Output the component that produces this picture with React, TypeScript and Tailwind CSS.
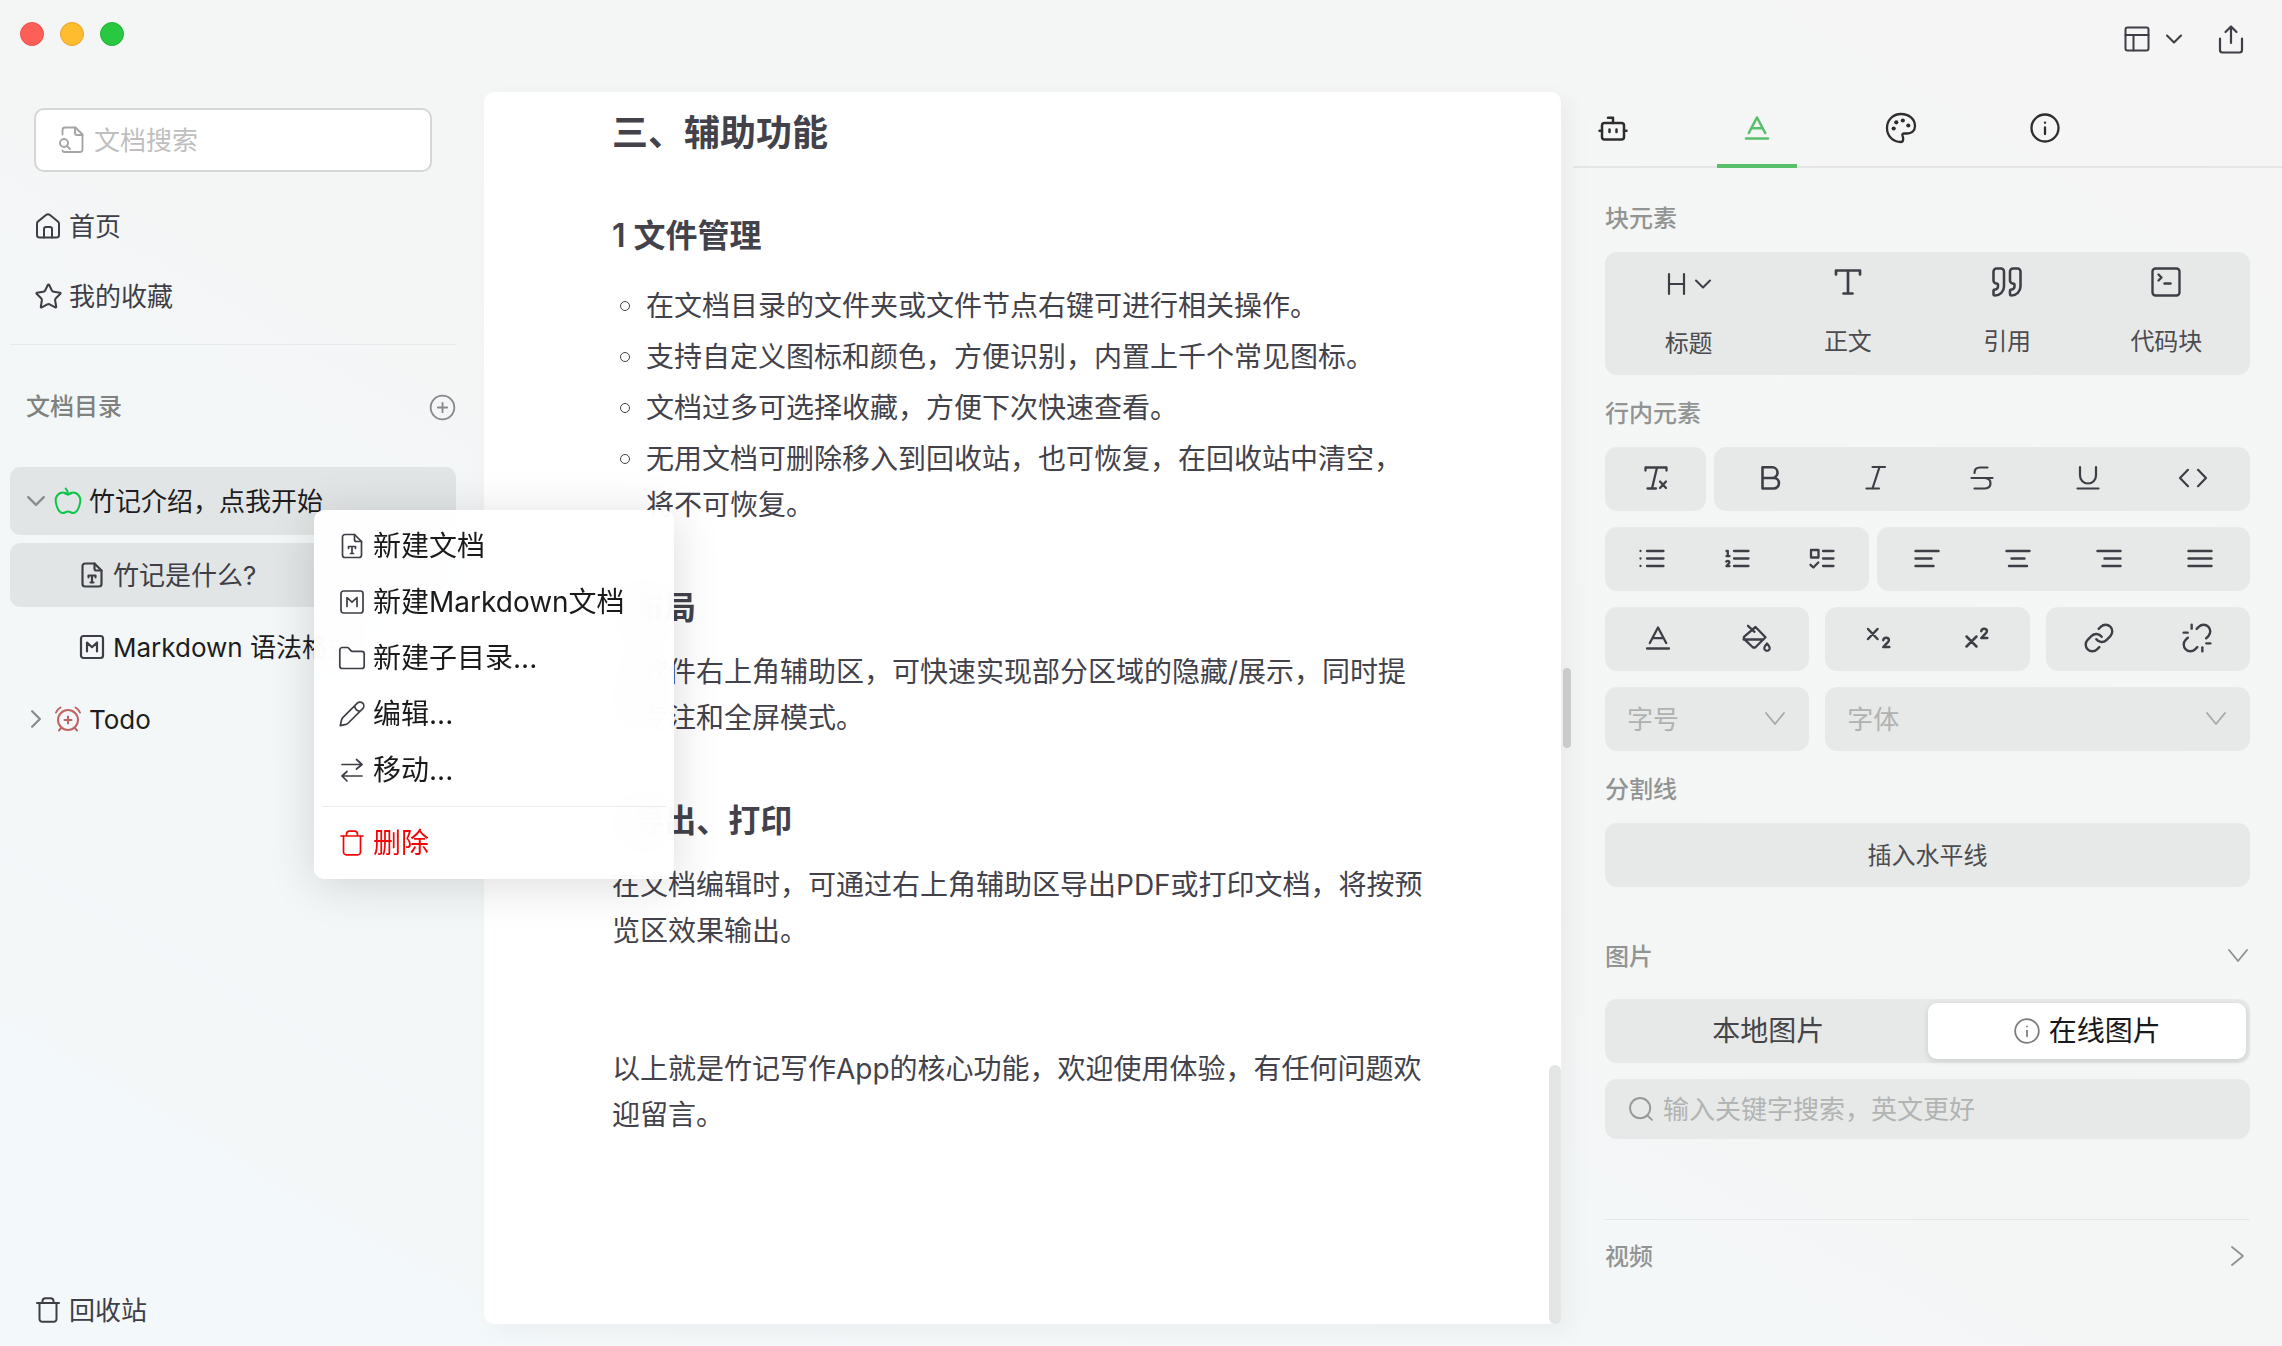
import type { ReactNode } from "react"
import { Link, Quote, SquareTerminal, Star, Unlink } from "lucide-react"

function Svg({ children, size = 32, sw = 2.3, className = "" }: { children: ReactNode; size?: number; sw?: number; className?: string }) {
  return (
    <svg
      width={size}
      height={size}
      viewBox="0 0 32 32"
      fill="none"
      stroke="currentColor"
      strokeWidth={sw}
      strokeLinecap="round"
      strokeLinejoin="round"
      className={`shrink-0 ${className}`}
      aria-hidden="true"
    >
      {children}
    </svg>
  )
}

function ChevronDownIcon({ sw = 1.8, className = "" }: { sw?: number; className?: string }) {
  return (
    <svg width="20" height="20" viewBox="0 0 20 20" fill="none" stroke="currentColor" strokeWidth={sw} strokeLinecap="round" strokeLinejoin="round" className={`shrink-0 ${className}`} aria-hidden="true">
      <path d="M1 4l9 11 9-11" />
    </svg>
  )
}

function SmallChevron({ size = 18, className = "" }: { size?: number; className?: string }) {
  return (
    <svg width={size} height={size} viewBox="0 0 18 18" fill="none" stroke="currentColor" strokeWidth="2.1" strokeLinecap="round" strokeLinejoin="round" className={`shrink-0 ${className}`} aria-hidden="true">
      <path d="M2 5.500l7 7 7-7" />
    </svg>
  )
}

const docPath = (
  <>
    <path d="M18.500 4.500H9A2.500 2.500 0 0 0 6.500 7v18A2.500 2.500 0 0 0 9 27.500h14A2.500 2.500 0 0 0 25.500 25V11.500z" />
    <path d="M18.500 4.500v5a2 2 0 0 0 2 2h5" />
    <path d="M12.500 18.300v-1.800h7v1.800M16 16.500v7M14.500 23.500h3" />
  </>
)

const mdPath = (
  <>
    <rect x="5" y="5" width="22" height="22" rx="2.500" />
    <path d="M11 20.500v-9l5 4.700 5-4.700v9" />
  </>
)

const trashPath = (
  <>
    <path d="M5 9h22M10.500 9V7q0-2.800 3-2.800h5q3 0 3 2.800v2" />
    <path d="M7.500 9v16a2.800 2.800 0 0 0 2.800 2.800h11.400a2.800 2.800 0 0 0 2.800-2.800V9" />
  </>
)

const infoPath = (
  <>
    <circle cx="16" cy="16" r="13.500" />
    <path d="M16 15.500v6.500M16 10.600v.2" />
  </>
)

const letterPath = <path d="M7.800 21L16 5.500 24.200 21M10.800 16.200h10.400M5 26.500h22" />

const menuItems = [
  { label: "新建文档", icon: docPath },
  { label: "新建Markdown文档", icon: mdPath },
  {
    label: "新建子目录...",
    icon: <path d="M3.800 8a2.500 2.500 0 0 1 2.500-2.500h5q1 0 1.700.9l1.600 2q.7.900 1.800.900h9.300a2.500 2.500 0 0 1 2.500 2.500V24a2.500 2.500 0 0 1-2.500 2.500H6.300A2.500 2.500 0 0 1 3.800 24z" />,
  },
  {
    label: "编辑...",
    icon: <path d="M4.300 27.700l1.200-5.700q.3-1.300 1.300-2.300L21.300 5.200a3.700 3.700 0 0 1 5.400 5.400L12.300 25q-1 1-2.300 1.400zM18.800 7.700c-.3 3 2.200 5.600 5.400 5.400" />,
  },
  { label: "移动...", icon: <path d="M6 10.500h20M20.500 5.500l5.500 5-5.500 4.500M26 22H6M11 17.500L6 22l5 5" /> },
]

const inlineTools = [
  { label: "加粗", sw: 2.6, icon: <path d="M7.500 5.300h9.700a5 5 0 0 1 0 10.700H7.500zM7.500 16h11.200a5 5 0 0 1 0 10.500H7.500z" /> },
  { label: "斜体", sw: 2.2, icon: <path d="M12.500 5H25M19.500 5l-7 21.500M6.500 26.500H19" /> },
  { label: "删除线", sw: 2.2, icon: <path d="M21.500 5.500H14q-5.500 0-5.500 5.500M5.500 16h21M19 16q5.500.5 5.500 5.300T19 26.500H8.500" /> },
  { label: "下划线", sw: 2.2, icon: <path d="M8 5v8.500a8 8 0 0 0 16 0V5M5.500 26.500h21" /> },
  { label: "行内代码", sw: 2.2, icon: <path d="M11 7.800L3 16l8 8.200M21 7.800l8 8.200-8 8.200" /> },
]

const listTools = [
  { label: "无序列表", sw: 2.3, icon: <path d="M4.500 9v.1M4.500 16.500v.1M4.500 24v.1M11 9h16.500M11 16.500h16.500M11 24h16.500" /> },
  {
    label: "有序列表",
    sw: 2.3,
    icon: (
      <>
        <path d="M13 9h14.500M13 16.500h14.500M13 24h14.500" />
        <path d="M5.500 9h1.300v5M5.500 14.200h3M5.300 19.500q1.400-1 2.500-.3t0 2.300l-2.300 2.600h3" />
      </>
    ),
  },
  {
    label: "任务列表",
    sw: 2.3,
    icon: <path d="M17 9h10.500M17 16.500h10.500M17 24h10.500M5 8h7.500v7.500H5zM4.500 22.800l2.800 2.700 5-5" />,
  },
]

const alignTools = [
  { label: "左对齐", sw: 2.4, icon: <path d="M4.500 9h23M4.500 16.500h16M4.500 24h18" /> },
  { label: "居中", sw: 2.4, icon: <path d="M4.500 9h23M9.500 16.500h13M7 24h18" /> },
  { label: "右对齐", sw: 2.4, icon: <path d="M4.500 9h23M11.500 16.500h16M9.500 24h18" /> },
  { label: "两端对齐", sw: 2.4, icon: <path d="M4.500 9h23M4.500 16.500h23M4.500 24h23" /> },
]

const colorTools = [
  { label: "文字颜色", sw: 2.3, icon: letterPath },
  {
    label: "背景颜色",
    sw: 2.3,
    icon: <path d="M15.500 5L25.500 15.300 15.700 25q-1.600 1.300-3.200 0l-8-7.700q-1.300-1.600 0-3zM3.500 17.500h20M8 3.800l6.500 6M27 21.500q3.300 3.500 2.500 5.600a2.700 2.700 0 0 1-5 0q-.8-2.100 2.500-5.600z" />,
  },
]

const scriptTools = [
  { label: "下标", sw: 2.5, icon: <path d="M6 7l9.500 10M15.500 7L6 17M21.300 18.200q.3-2.500 2.800-2.500t2.800 2.200q0 1.400-1.700 3L21.300 25h6" /> },
  { label: "上标", sw: 2.5, icon: <path d="M5.500 14.500l10 10M15.500 14.500l-10 10M20.300 9.200q.3-2.500 2.800-2.500t2.800 2.200q0 1.400-1.700 3L20.300 16h6" /> },
]

type Tool = { label: string; sw: number; icon: ReactNode }

function ToolGroup({ tools, className = "" }: { tools: Tool[]; className?: string }) {
  return (
    <div className={`flex h-16 rounded-xl bg-[#e7e9e8] px-1 pt-1 pb-1.5 text-[#3f3e47] ${className}`}>
      {tools.map((t) => (
        <button key={t.label} type="button" aria-label={t.label} className="flex flex-1 items-center justify-center">
          <Svg sw={t.sw}>{t.icon}</Svg>
        </button>
      ))}
    </div>
  )
}

function SectionTitle({ children }: { children: ReactNode }) {
  return <h4 className="pt-0.5 text-2xl/[34px] font-medium text-[#929493]">{children}</h4>
}

function SelectBox({ label, className = "" }: { label: string; className?: string }) {
  return (
    <div className={`relative ${className}`}>
      <select aria-label={label} className="h-16 w-full appearance-none rounded-xl bg-[#e7e9e8] px-[22px] text-[26px] text-[#b0b2b1]">
        <option>{label}</option>
      </select>
      <ChevronDownIcon className="pointer-events-none absolute top-[22px] right-6 text-[#a6a8a7]" />
    </div>
  )
}

function Header() {
  return (
    <header className="flex h-[92px] shrink-0 items-start justify-between pr-[35px] pl-5">
      <div className="flex gap-4 pt-[22px]">
        <button type="button" aria-label="关闭" className="size-6 rounded-full border border-[#e8544c] bg-[#ff5f57]" />
        <button type="button" aria-label="最小化" className="size-6 rounded-full border border-[#e5a52e] bg-[#febc2e]" />
        <button type="button" aria-label="缩放" className="size-6 rounded-full border border-[#25b139] bg-[#28c840]" />
      </div>
      <div className="flex gap-8 pt-[23px] text-[#3f3e47]">
        <button type="button" aria-label="布局" className="flex items-center gap-3">
          <Svg sw={2}>
            <rect x="4.500" y="4.500" width="23" height="23" rx="2" />
            <path d="M4.500 12h23M12.500 12v15.500" />
          </Svg>
          <SmallChevron />
        </button>
        <button type="button" aria-label="导出">
          <Svg sw={2.2}>
            <path d="M5 15.500V27a2.500 2.500 0 0 0 2.500 2.500h17A2.500 2.500 0 0 0 27 27V15.500M16 20V3.500M10.500 9L16 3.500 21.500 9" />
          </Svg>
        </button>
      </div>
    </header>
  )
}

function Sidebar() {
  return (
    <aside className="flex w-[484px] shrink-0 flex-col pt-4 pr-7 pb-4 pl-[10px] text-[26px]">
      <label className="mx-6 flex h-16 items-center gap-[7px] rounded-[10px] border-2 border-[#d5d7d6] bg-white pl-[19px]">
        <Svg sw={1.9} className="text-[#a5a5a8]">
          <path d="M7.500 10.500V6A2.500 2.500 0 0 1 10 3.500h10.500l7 7V25.500A2.500 2.500 0 0 1 25 28H9q-1.500 0-1.500-1.500" />
          <path d="M20 3.500V9a2 2 0 0 0 2 2h5.500M12.300 22.300l2.700 2.700" />
          <circle cx="9" cy="19" r="4" />
        </Svg>
        <input aria-label="文档搜索" placeholder="文档搜索" className="min-w-0 flex-1 outline-none placeholder:text-[#bfbfc0]" />
      </label>

      <nav className="mt-[19px] border-b border-[#e6e9e9] pb-[13px] text-[#3f3e47]">
        <a href="#home" className="flex h-[70px] items-center gap-[5px] pl-[22px]">
          <Svg sw={2}>
            <path d="M5 13.700V25a2.500 2.500 0 0 0 2.500 2.500h17A2.500 2.500 0 0 0 27 25V13.700q0-1.400-1.100-2.300L18 5q-2-1.600-4 0l-7.900 6.400Q5 12.300 5 13.700z" />
            <path d="M12 27.500V19a2 2 0 0 1 2-2h4a2 2 0 0 1 2 2v8.500" />
          </Svg>
          首页
        </a>
        <a href="#star" className="flex h-[70px] items-center gap-[5px] pl-[22px]">
          <span className="flex w-8 justify-center">
            <Star size={29} strokeWidth={1.7} />
          </span>
          我的收藏
        </a>
      </nav>

      <div className="mt-[42px] flex h-10 items-center justify-between pl-4">
        <h3 className="text-2xl font-medium text-[#808280]">文档目录</h3>
        <button type="button" aria-label="新建" className="text-[#87898a]">
          <Svg size={27} sw={2.2}>
            <circle cx="16" cy="16" r="14" />
            <path d="M16 10.500v11M10.500 16h11" />
          </Svg>
        </button>
      </div>

      <ul className="mt-10 flex flex-col gap-2 text-[#1d1d1f]">
        <li className="flex h-[68px] items-center rounded-[10px] bg-[#e2e5e5] pl-4">
          <SmallChevron size={20} className="text-[#8a8c8e]" />
          <Svg sw={2} className="ml-1.5 text-[#0fc64c]">
            <path d="M16 9.500C13.500 7.500 10.500 7 8.300 8 4 10.200 3 15 4.300 19.500c1.200 4.500 3.700 8.500 6.700 8.500 2 0 3-1.500 5-1.500s3 1.500 5 1.500c3 0 5.500-4 6.700-8.500C29 15 28 10.200 23.700 8c-2.200-1-5.200-.5-7.700 1.500z" />
            <path d="M16 9.500c0-2.500-.7-4.300-2.300-6M12.500 8.300q3.500 2.500 7 0" />
          </Svg>
          <span className="ml-[5px]">竹记介绍，点我开始</span>
        </li>
        <li className="flex h-16 items-center gap-[5px] rounded-[10px] bg-[#e2e5e5] pl-[66px] text-[#3f3e47]">
          <Svg sw={2.2}>{docPath}</Svg>
          竹记是什么?
        </li>
        <li className="flex h-16 items-center gap-[5px] pl-[66px] whitespace-nowrap">
          <Svg sw={2.2} className="text-[#3f3e47]">{mdPath}</Svg>
          Markdown 语法格式
        </li>
        <li className="flex h-16 items-center pl-4">
          <SmallChevron size={20} className="-rotate-90 text-[#8a8c8e]" />
          <Svg sw={2} className="ml-1.5 text-[#bf6464]">
            <circle cx="16" cy="17" r="10" />
            <path d="M16 13.500v7M12.500 17h7M9.500 24.500L7 27.500M22.500 24.500l2.500 3M4 9.500q1-3 4.500-5M28 9.500q-1-3-4.500-5" />
          </Svg>
          <span className="ml-[5px]">Todo</span>
        </li>
      </ul>

      <a href="#trash" className="mt-auto flex h-10 items-center gap-[5px] pl-[22px] text-[#3f3e47]">
        <Svg sw={2}>{trashPath}</Svg>
        回收站
      </a>
    </aside>
  )
}

function ContextMenu() {
  return (
    <div role="menu" className="absolute top-[510px] left-[314px] w-[360px] rounded-[10px] bg-white/95 p-2 text-[28px] text-[#1a1a1c] shadow-[0_6px_48px_rgba(0,0,0,0.14)] backdrop-blur-xl">
      {menuItems.map((m) => (
        <button key={m.label} type="button" role="menuitem" className="flex h-14 w-full items-center gap-[5px] pl-[14px]">
          <Svg sw={1.7} className="text-[#3f3e47]">{m.icon}</Svg>
          {m.label}
        </button>
      ))}
      <hr className="my-2 border-[#ececee]" />
      <button type="button" role="menuitem" className="flex h-14 w-full items-center gap-[5px] pl-[14px] text-[#f00808]">
        <Svg sw={1.7}>{trashPath}</Svg>
        删除
      </button>
    </div>
  )
}

const features = [
  "在文档目录的文件夹或文件节点右键可进行相关操作。",
  "支持自定义图标和颜色，方便识别，内置上千个常见图标。",
  "文档过多可选择收藏，方便下次快速查看。",
  "无用文档可删除移入到回收站，也可恢复，在回收站中清空，将不可恢复。",
]

function Editor() {
  return (
    <main className="relative mb-[22px] min-w-0 flex-1 rounded-[10px] bg-white pt-[14px] pr-[132px] pl-32 text-[28px]/[46px] text-[#43424b] shadow-[10px_6px_24px_rgba(0,0,0,0.04)]">
      <h2 className="text-4xl/[54px] font-semibold">三、辅助功能</h2>
      <h3 className="mt-[52px] text-[32px]/[48px] font-semibold">1 文件管理</h3>
      <ul className="mt-[23px] flex flex-col gap-[5px] pr-2">
        {features.map((f) => (
          <li key={f} className="flex">
            <span className="mt-[18px] mr-4 ml-2 size-[10px] shrink-0 rounded-full border border-[#43424b]" />
            {f}
          </li>
        ))}
      </ul>
      <h3 className="mt-14 text-[32px]/[48px] font-semibold">2布局</h3>
      <p className="mt-[17px]">在软件右上角辅助区，可快速实现部分区域的隐藏/展示，同时提供专注和全屏模式。</p>
      <h3 className="mt-14 text-[32px]/[48px] font-semibold">3导出、打印</h3>
      <p className="mt-[17px]">在文档编辑时，可通过右上角辅助区导出PDF或打印文档，将按预览区效果输出。</p>
      <p className="mt-[92px]">以上就是竹记写作App的核心功能，欢迎使用体验，有任何问题欢迎留言。</p>
      <div className="absolute right-0 bottom-0 h-[259px] w-3 rounded-full bg-[#e4e6e5]" />
    </main>
  )
}

function Tabs() {
  return (
    <div className="flex h-[76px] gap-16 border-b-2 border-[#e5e6e5] text-[#2e2e31]">
      <button type="button" aria-label="助手" className="flex w-20 justify-center pt-5">
        <Svg sw={2.5}>
          <rect x="5" y="11" width="22" height="16.500" rx="2.500" />
          <path d="M2.500 18.800H5M27 18.800h2.500M11 5.800h5V11M12.500 17.500v2.500M19.500 17.500v2.500" />
        </Svg>
      </button>
      <button type="button" aria-label="格式" className="-mb-0.5 flex w-20 justify-center border-b-4 border-[#58bf6a] pt-5 text-[#58bf6a]">
        <Svg sw={2.6}>{letterPath}</Svg>
      </button>
      <button type="button" aria-label="主题" className="flex w-20 justify-center pt-5">
        <Svg sw={2.3}>
          <path d="M16 30C8 30 2 24 2 16S8 2 16 2s14 5.200 14 12.300c0 4.700-3.700 7.200-7.700 7.200h-3c-1.700 0-2.300.8-1.800 2.200.4 1.200.7 1.800.7 3 0 2-.7 3.300-2.200 3.300z" />
          <g fill="currentColor" stroke="none">
            <circle cx="8.700" cy="16.500" r="2.100" />
            <circle cx="11.300" cy="10.300" r="2.100" />
            <circle cx="17.800" cy="8.500" r="2.100" />
            <circle cx="23.300" cy="13.500" r="2.100" />
          </g>
        </Svg>
      </button>
      <button type="button" aria-label="信息" className="flex w-20 justify-center pt-5">
        <Svg sw={2.3}>{infoPath}</Svg>
      </button>
    </div>
  )
}

function Inspector() {
  return (
    <aside className="w-[709px] shrink-0">
      <Tabs />
      <div className="px-8 pt-8">
        <SectionTitle>块元素</SectionTitle>
        <div className="mt-4 flex h-[123px] rounded-xl bg-[#e7e9e8] p-1 text-2xl/9 text-[#4c4c50]">
          <button type="button" className="flex flex-1 flex-col items-center pt-[10px]">
            <span className="flex h-9 items-center gap-2 text-[#3f3e47]">
              <svg width="20" height="24" viewBox="0 0 20 24" fill="none" stroke="currentColor" strokeWidth="2.2" strokeLinecap="round" aria-hidden="true">
                <path d="M3 2v20M18 2v20M3 12h15" />
              </svg>
              <SmallChevron />
            </span>
            <span className="mt-6">标题</span>
          </button>
          <button type="button" className="flex flex-1 flex-col items-center pt-2">
            <span className="flex h-9 items-center text-[#3f3e47]">
              <Svg sw={2.7}>
                <path d="M4 8.500V4.500h24v4M16 4.500V27.500M11.500 27.500h9" />
              </Svg>
            </span>
            <span className="mt-6">正文</span>
          </button>
          <button type="button" className="flex flex-1 flex-col items-center pt-2">
            <Quote size={36} strokeWidth={1.7} className="text-[#3f3e47]" />
            <span className="mt-6">引用</span>
          </button>
          <button type="button" className="flex flex-1 flex-col items-center pt-2">
            <SquareTerminal size={36} strokeWidth={1.6} className="text-[#3f3e47]" />
            <span className="mt-6">代码块</span>
          </button>
        </div>

        <div className="mt-5 flex flex-col gap-4">
          <SectionTitle>行内元素</SectionTitle>
          <div className="flex gap-2">
            <ToolGroup
              className="w-[101px]"
              tools={[{ label: "清除格式", sw: 2.3, icon: <path d="M5.500 8.500V5.500h21v3M17 5.500L12 26.500M7.500 26.500h8.500M20 19.500l6 6.500M26 19.500L20 26" /> }]}
            />
            <ToolGroup className="flex-1" tools={inlineTools} />
          </div>
          <div className="flex gap-2">
            <ToolGroup className="w-[264px]" tools={listTools} />
            <ToolGroup className="flex-1" tools={alignTools} />
          </div>
          <div className="grid grid-cols-3 gap-4">
            <ToolGroup tools={colorTools} />
            <ToolGroup tools={scriptTools} />
            <div className="flex h-16 rounded-xl bg-[#e7e9e8] px-1 pt-1 pb-1.5 text-[#3f3e47]">
              <button type="button" aria-label="链接" className="flex flex-1 items-center justify-center">
                <Link size={32} strokeWidth={1.8} />
              </button>
              <button type="button" aria-label="取消链接" className="flex flex-1 items-center justify-center">
                <Unlink size={32} strokeWidth={1.8} />
              </button>
            </div>
          </div>
          <div className="grid grid-cols-3 gap-4">
            <SelectBox label="字号" />
            <SelectBox label="字体" className="col-span-2" />
          </div>
        </div>

        <div className="mt-5">
          <SectionTitle>分割线</SectionTitle>
          <button type="button" className="mt-4 h-16 w-full rounded-xl bg-[#e7e9e8] pt-0.5 text-2xl text-[#4c4c50]">
            插入水平线
          </button>
        </div>

        <div className="mt-[51px] flex items-center justify-between pr-0.5">
          <SectionTitle>图片</SectionTitle>
          <ChevronDownIcon className="text-[#8e9091]" />
        </div>
        <div className="mt-[25px] flex h-16 rounded-xl bg-[#e7e9e8] p-1 text-[28px] text-[#454549]">
          <button type="button" className="flex-1">本地图片</button>
          <button type="button" className="flex flex-1 items-center justify-center gap-2 rounded-[9px] bg-white text-[#19191b] shadow-[0_2px_6px_rgba(0,0,0,0.12)]">
            <Svg size={28} sw={2} className="text-[#7b7b7e]">{infoPath}</Svg>
            在线图片
          </button>
        </div>
        <label className="mt-4 flex h-[60px] items-center gap-2 rounded-xl bg-[#e7e9e8] pl-[22px] text-[26px]">
          <Svg size={28} sw={2.2} className="text-[#989a9a]">
            <circle cx="15" cy="15" r="11.500" />
            <path d="M23.500 23.500l5 5" />
          </Svg>
          <input aria-label="搜索图片" placeholder="输入关键字搜索，英文更好" className="min-w-0 flex-1 outline-none placeholder:text-[#b2b4b3]" />
        </label>

        <div className="mt-20 flex items-center justify-between border-t border-[#e6e8e8] pt-[18px] pr-0.5">
          <SectionTitle>视频</SectionTitle>
          <ChevronDownIcon className="-rotate-90 text-[#8e9091]" />
        </div>
      </div>
    </aside>
  )
}

export default function App() {
  return (
    <div className="relative flex min-h-screen flex-col bg-linear-to-tr from-[#f3f8fa] via-[#f4f6f6] to-[#f5f5f5] font-['Inter','Noto_Sans_CJK_SC',sans-serif]">
      <Header />
      <div className="flex flex-1">
        <Sidebar />
        <Editor />
        <div className="mb-[22px] flex w-3 items-center justify-center">
          <div className="h-20 w-2 rounded-full bg-[#cfd1d0]" />
        </div>
        <Inspector />
      </div>
      <ContextMenu />
    </div>
  )
}
